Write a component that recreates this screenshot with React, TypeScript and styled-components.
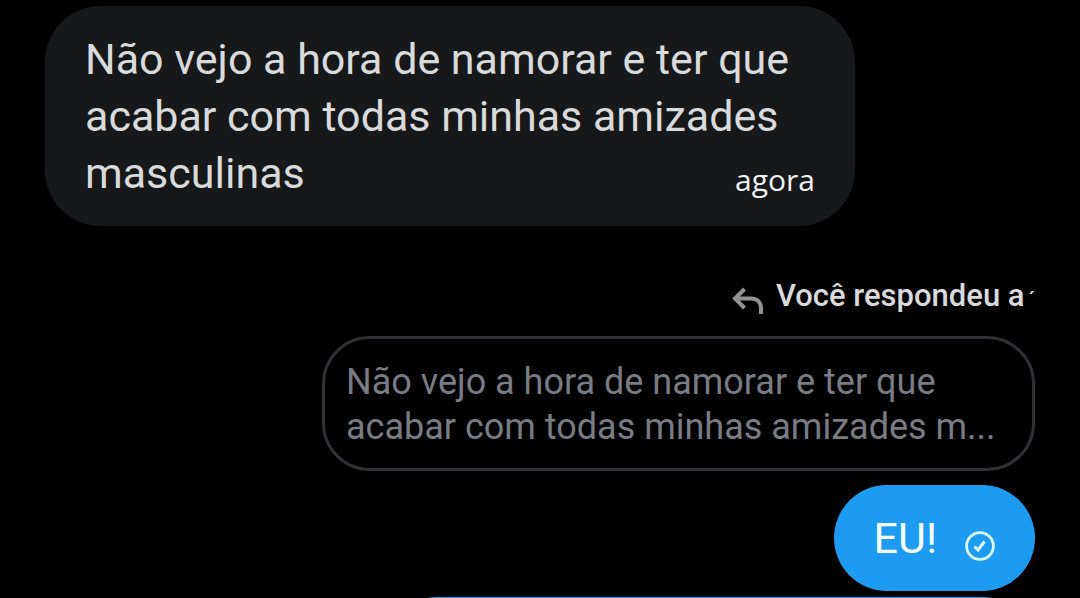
import React from "react";
import styled, { createGlobalStyle } from "styled-components";

const colors = {
  background: "#000000",
  received: "#16181a",
  sent: "#1d9bf0",
  outline: "#2f3134",
  text: "#d9dadb",
  muted: "#797c82",
  time: "#f0f1f2",
  icon: "#929292",
};

const GlobalStyle = createGlobalStyle`
  * {
    box-sizing: border-box;
  }

  body {
    margin: 0;
    overflow: hidden;
    background: ${colors.background};
    font-family: Roboto, "Liberation Sans", sans-serif;
  }
`;

const Chat = styled.main`
  display: flex;
  flex-direction: column;
  height: 100vh;
  padding: 6px 45px 0;
  overflow: hidden;
`;

const Bubble = styled.article<{ $sent?: boolean }>`
  display: ${({ $sent }) => ($sent ? "flex" : "flow-root")};
  flex-shrink: 0;
  align-self: ${({ $sent }) => ($sent ? "flex-end" : "flex-start")};
  gap: 28px;
  width: ${({ $sent }) => ($sent ? "auto" : "810px")};
  max-width: 100%;
  padding: 25px 40px 24px;
  border-radius: 56px;
  background: ${({ $sent }) => ($sent ? colors.sent : colors.received)};
  color: ${({ $sent }) => ($sent ? "#f4fcff" : colors.text)};
  font-size: 43px;
  line-height: 57px;
`;

const Message = styled.p`
  display: inline;
  margin: 0;
`;

// floats onto the last line of the message when there is room for it
const Time = styled.time`
  float: right;
  margin-top: 14px;
  color: ${colors.time};
  font-family: "Open Sans", sans-serif;
  font-size: 30px;
  line-height: 42px;
`;

const Reply = styled.section`
  display: flex;
  flex-direction: column;
  flex-shrink: 0;
  align-items: flex-end;
  margin-top: 49px;
`;

const ReplyLabel = styled.header`
  display: flex;
  align-items: center;
  gap: 12px;
  color: ${colors.text};
  font-size: 31px;
  font-weight: 500;
  line-height: 42px;
`;

const ReplyIcon = styled.svg`
  width: 32px;
  height: 28px;
  margin-top: 10px;
`;

const Mark = styled.span`
  margin-left: 4px;
  font-size: 20px;
  line-height: 1;
`;

const Quote = styled.blockquote`
  width: 713px;
  max-width: 100%;
  margin: 19px 0 14px;
  padding: 21px 21px 18px;
  border: 3px solid ${colors.outline};
  border-radius: 48px;
  color: ${colors.muted};
  font-size: 36px;
  line-height: 45px;
`;

const SentIcon = styled.svg`
  align-self: flex-end;
  width: 30px;
  height: 30px;
  margin-bottom: 6px;
`;

const NextBubble = styled.article`
  flex-shrink: 0;
  align-self: flex-end;
  width: 650px;
  max-width: 100%;
  height: 106px;
  margin-top: 6px;
  border-radius: 56px;
  background: ${colors.sent};
`;

const App: React.FC = () => {
  return (
    <>
      <GlobalStyle />
      <Chat>
        <Bubble>
          <Message>
            Não vejo a hora de namorar e ter que acabar com todas minhas
            amizades masculinas
          </Message>
          <Time>agora</Time>
        </Bubble>

        <Reply>
          <ReplyLabel>
            <ReplyIcon viewBox="0 0 32 28" fill="none" aria-hidden="true">
              <path
                d="M12.5 2L3 11.5L12.5 21M3.5 11.5H19C25 11.5 29 15.5 29 21.5V27"
                stroke={colors.icon}
                strokeWidth="4"
              />
            </ReplyIcon>
            <span>
              Você respondeu a<Mark>´</Mark>
            </span>
          </ReplyLabel>
          <Quote>
            Não vejo a hora de namorar e ter que acabar com todas minhas
            amizades m...
          </Quote>
          <Bubble $sent>
            <Message>EU!</Message>
            <SentIcon viewBox="0 0 30 30" fill="none" aria-hidden="true">
              <circle cx="15" cy="15" r="13.4" stroke="#d8f6ff" strokeWidth="2.8" />
              <path
                d="M9.5 15.5L13 19L19.5 10.5"
                stroke="#d8f6ff"
                strokeWidth="3"
              />
            </SentIcon>
          </Bubble>
        </Reply>
        <NextBubble />
      </Chat>
    </>
  );
};

export default App;
